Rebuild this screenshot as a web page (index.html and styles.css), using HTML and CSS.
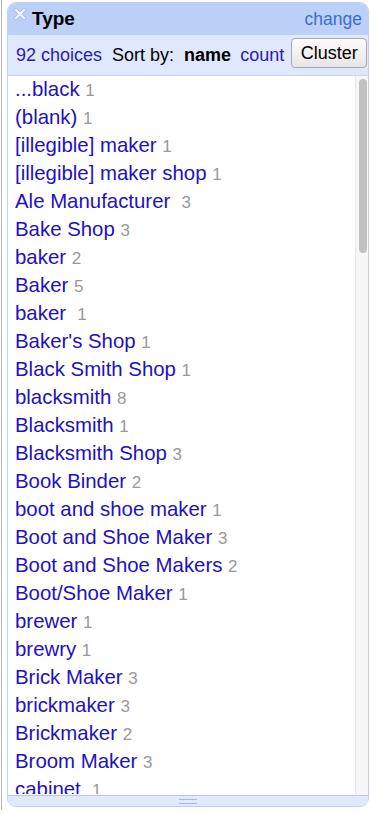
FILE: index.html
```html
<!DOCTYPE html>
<html>
<head>
<meta charset="utf-8">
<link rel="stylesheet" href="styles.css">
</head>
<body>
<div class="page">
  <div class="facet">
    <div class="facet-title">
      <span class="remove" aria-label="remove">
        <svg width="12" height="12" viewBox="0 0 12 12"><path d="M2 2 L10 10 M10 2 L2 10" stroke="#9fb6e6" stroke-width="3.4" stroke-linecap="square"/><path d="M2 2 L10 10 M10 2 L2 10" stroke="#f4f7ff" stroke-width="2" stroke-linecap="square"/></svg>
      </span>
      <span class="name">Type</span>
      <a class="change">change</a>
    </div>
    <div class="facet-controls">
      <a class="choices">92 choices</a>
      <span class="sortby">Sort by:</span>
      <span class="sort-active">name</span>
      <a class="sort-link">count</a>
      <button class="cluster">Cluster</button>
    </div>
    <div class="facet-body">
      <ul class="choice-list">
        <li><a>...black</a> <span class="count">1</span></li>
        <li><a>(blank)</a> <span class="count">1</span></li>
        <li><a>[illegible] maker</a> <span class="count">1</span></li>
        <li><a>[illegible] maker shop</a> <span class="count">1</span></li>
        <li><a>Ale Manufacturer&nbsp;</a> <span class="count">3</span></li>
        <li><a>Bake Shop</a> <span class="count">3</span></li>
        <li><a>baker</a> <span class="count">2</span></li>
        <li><a>Baker</a> <span class="count">5</span></li>
        <li><a>baker&nbsp;</a> <span class="count">1</span></li>
        <li><a>Baker's Shop</a> <span class="count">1</span></li>
        <li><a>Black Smith Shop</a> <span class="count">1</span></li>
        <li><a>blacksmith</a> <span class="count">8</span></li>
        <li><a>Blacksmith</a> <span class="count">1</span></li>
        <li><a>Blacksmith Shop</a> <span class="count">3</span></li>
        <li><a>Book Binder</a> <span class="count">2</span></li>
        <li><a>boot and shoe maker</a> <span class="count">1</span></li>
        <li><a>Boot and Shoe Maker</a> <span class="count">3</span></li>
        <li><a>Boot and Shoe Makers</a> <span class="count">2</span></li>
        <li><a>Boot/Shoe Maker</a> <span class="count">1</span></li>
        <li><a>brewer</a> <span class="count">1</span></li>
        <li><a>brewry</a> <span class="count">1</span></li>
        <li><a>Brick Maker</a> <span class="count">3</span></li>
        <li><a>brickmaker</a> <span class="count">3</span></li>
        <li><a>Brickmaker</a> <span class="count">2</span></li>
        <li><a>Broom Maker</a> <span class="count">3</span></li>
        <li><a>cabinet&nbsp;</a> <span class="count">1</span></li>
      </ul>
      <div class="scrollbar"><div class="thumb"></div></div>
    </div>
    <div class="facet-footer"><span class="grip"></span></div>
  </div>
</div>
</body>
</html>
```

FILE: styles.css
```css
html, body {
  margin: 0;
  padding: 0;
  background: #fff;
}
body {
  font-family: "Liberation Sans", Arial, sans-serif;
}
.page {
  margin-left: 1px;
  border-left: 1px solid #b4b4b4;
  height: 810px;
  padding: 2px 1px 0 5px;
  box-sizing: border-box;
}
.facet {
  width: 362px;
  border: 1px solid #bccff7;
  border-radius: 9px;
  overflow: hidden;
  box-sizing: border-box;
  background: #fff;
}
.facet-title {
  height: 32px;
  background: #bdd0f8;
  display: flex;
  align-items: center;
  padding: 0 6px 0 6px;
}
.remove {
  width: 12px;
  height: 12px;
  align-self: flex-start;
  margin-top: 5px;
  margin-right: 6px;
}
.remove svg { display: block; }
.name {
  font-weight: bold;
  font-size: 19px;
  color: #000;
  flex: 1;
}
.change {
  font-size: 17.5px;
  color: #3d6bd1;
}
.facet-controls {
  background: #dfe8fc;
  border-bottom: 1px solid #c2d3f8;
  display: flex;
  align-items: center;
  padding: 0 0 0 8px;
  font-size: 18px;
  box-sizing: border-box;
  height: 41px;
}
.choices { color: #2a1bb5; margin-right: 10px; }
.sortby { color: #000; margin-right: 10px; }
.sort-active { font-weight: bold; color: #000; margin-right: 9px; }
.sort-link { color: #2a1bb5; margin-right: 7px; }
.cluster {
  font-family: "Liberation Sans", Arial, sans-serif;
  font-size: 18px;
  height: 30px;
  width: 76px;
  padding: 0;
  margin-bottom: 4px;
  border: 1px solid #a9a9a9;
  border-radius: 4px;
  background: linear-gradient(#fbfbfb, #e6e6e6);
  color: #000;
}
.facet-body {
  height: 719px;
  display: flex;
  overflow: hidden;
}
.choice-list {
  list-style: none;
  margin: 0;
  padding: 0 0 0 7px;
  flex: 1;
  overflow: hidden;
  position: relative;
  top: -1px;
}
.choice-list li {
  height: 28px;
  line-height: 28px;
  font-size: 20.4px;
  white-space: nowrap;
}
.choice-list a {
  color: #2211bf;
}
.count {
  color: #999;
  font-size: 17px;
}
.scrollbar {
  width: 13px;
  background: #f7f7f7;
  border-left: 1px solid #e6e6e6;
  padding: 3px 0 0 3px;
  box-sizing: border-box;
}
.thumb {
  width: 8px;
  height: 174px;
  background: #c1c1c1;
  border-radius: 4px;
}
.facet-footer {
  height: 10px;
  background: #e1e9fc;
  border-top: 1px solid #b5c8f5;
  display: flex;
  justify-content: center;
  align-items: center;
}
.grip {
  width: 18px;
  height: 3px;
  border-top: 1px solid #9fb7ee;
  border-bottom: 1px solid #9fb7ee;
}
```
